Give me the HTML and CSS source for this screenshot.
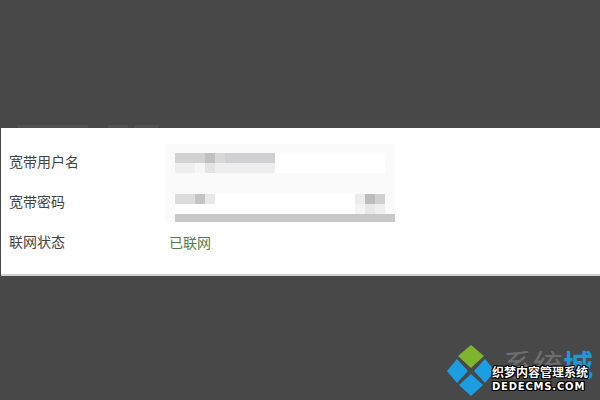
FILE: index.html
```html
<!DOCTYPE html>
<html lang="zh-CN">
<head>
<meta charset="utf-8">
<title>宽带设置</title>
<link rel="stylesheet" href="styles.css">
</head>
<body>
<div class="top">
  <div class="ghost"><i class="g1"></i><i class="g2"></i><i class="g3"></i></div>
</div>
<main class="panel">
  <div class="labels">
    <div class="label">宽带用户名</div>
    <div class="label">宽带密码</div>
    <div class="label">联网状态</div>
  </div>
  <div class="values">
    <div class="field field-user">
      <div class="user-row">
        <div class="mosaic user-a"></div>
        <div class="mosaic user-b"></div>
      </div>
    </div>
    <div class="field field-pass">
      <div class="pass-row">
        <div class="mosaic pass-a"></div>
        <div class="mosaic pass-eye"></div>
      </div>
      <div class="underline"></div>
    </div>
    <div class="status">已联网</div>
  </div>
</main>
<div class="bottom"></div>
<div class="mark">
  <svg class="logo" width="50" height="54" viewBox="0 0 50 54" aria-hidden="true">
    <path d="M25 1 L38 12 L25 24 L12 12 Z" fill="#7fb52e"/>
    <path d="M11 15 L22 27 L11 39 L1 27 Z" fill="#1c9fe2"/>
    <path d="M39 15 L49 27 L39 39 L28 27 Z" fill="#1c9fe2"/>
    <path d="M25 30 L37 41 L25 52 L13 41 Z" fill="#1c9fe2"/>
  </svg>
  <span class="brand">系统<b>城</b></span>
  <span class="dede-cn">织梦内容管理系统</span>
  <span class="dede-en">DEDECMS.COM</span>
</div>
</body>
</html>
```
FILE: styles.css
```css
html, body { margin: 0; padding: 0; }
body {
  width: 600px;
  height: 400px;
  overflow: hidden;
  background: #484848;
  font-family: "Liberation Sans", "Noto Sans CJK SC", sans-serif;
  position: relative;
}
.top { height: 128px; display: flex; align-items: flex-end; }
.ghost { display: flex; gap: 6px; padding: 0 0 0 18px; }
.ghost i { display: block; height: 3px; background: #525252; }
.g1 { width: 70px; }
.g2 { width: 20px; margin-left: 14px; }
.g3 { width: 24px; }
.panel {
  height: 146px;
  margin-left: 1px;
  background: #fff;
  border-bottom: 2px solid #d0d0d0;
  display: flex;
}
.labels { width: 164px; padding: 14px 0 0 8px; box-sizing: border-box; }
.label { height: 40px; line-height: 40px; font-size: 14px; color: #444; }
.values { padding-top: 16px; }
.field { width: 230px; background: #fafafa; box-sizing: border-box; }
.field-user { height: 40px; padding: 9px 10px 0; }
.user-row { height: 20px; background: #fff; }
.mosaic { background-repeat: no-repeat; }
.user-a {
  height: 10px;
  background-image: linear-gradient(90deg, #d2d2d2 0 30px, #c0c0c0 30px 40px, #d8d8d8 40px 50px, #cfcfd4 50px 100px, #fff 100px);
}
.user-b {
  height: 10px;
  background-image: linear-gradient(90deg, #eeeeee 0 20px, #f6f6f6 20px 30px, #e4e4e4 30px 40px, #eeeeee 40px 100px, #fff 100px);
}
.field-pass { height: 38px; padding: 10px 0 0 10px; }
.pass-row { display: flex; justify-content: space-between; height: 20px; margin-right: 10px; background: #fff; }
.pass-a {
  width: 40px; height: 10px;
  background-image: linear-gradient(90deg, #dcdcdc 0 20px, #c4c4c4 20px 30px, #e8e8e8 30px);
}
.pass-eye {
  width: 30px; height: 20px;
  background-image:
    linear-gradient(90deg, #ececec 0 10px, #bcbcbc 10px 20px, #d0d0d0 20px),
    linear-gradient(90deg, #f4f4f4 0 10px, #e8e8e8 10px 20px, #efefef 20px);
  background-size: 100% 10px, 100% 10px;
  background-position: 0 0, 0 10px;
}
.underline { height: 8px; background: #c8c8c8; }
.status { margin: 1px 0 0 4px; height: 40px; line-height: 40px; font-size: 14px; color: #4f7f4a; }
.bottom { height: 124px; }
.mark { position: absolute; left: 446px; top: 344px; width: 154px; height: 54px; }
.logo { position: absolute; left: 0; top: 0; }
.brand { position: absolute; left: 57px; top: 5px; font-size: 30px; line-height: 34px; color: #6e6e6e; white-space: nowrap; }
.brand b { color: #2296dc; font-weight: 700; }
.dede-cn, .dede-en {
  position: absolute; color: #fff; white-space: nowrap; font-weight: 700;
  text-shadow: 1px 0 0 #000, -1px 0 0 #000, 0 1px 0 #000, 0 -1px 0 #000, 1px 1px 0 #000, -1px -1px 0 #000, 1px -1px 0 #000, -1px 1px 0 #000;
}
.dede-cn { left: 46px; top: 22px; font-size: 12px; line-height: 14px; }
.dede-en { left: 46px; top: 37px; font-family: "DejaVu Sans", sans-serif; font-size: 10px; line-height: 12px; letter-spacing: 0.8px; }
```
